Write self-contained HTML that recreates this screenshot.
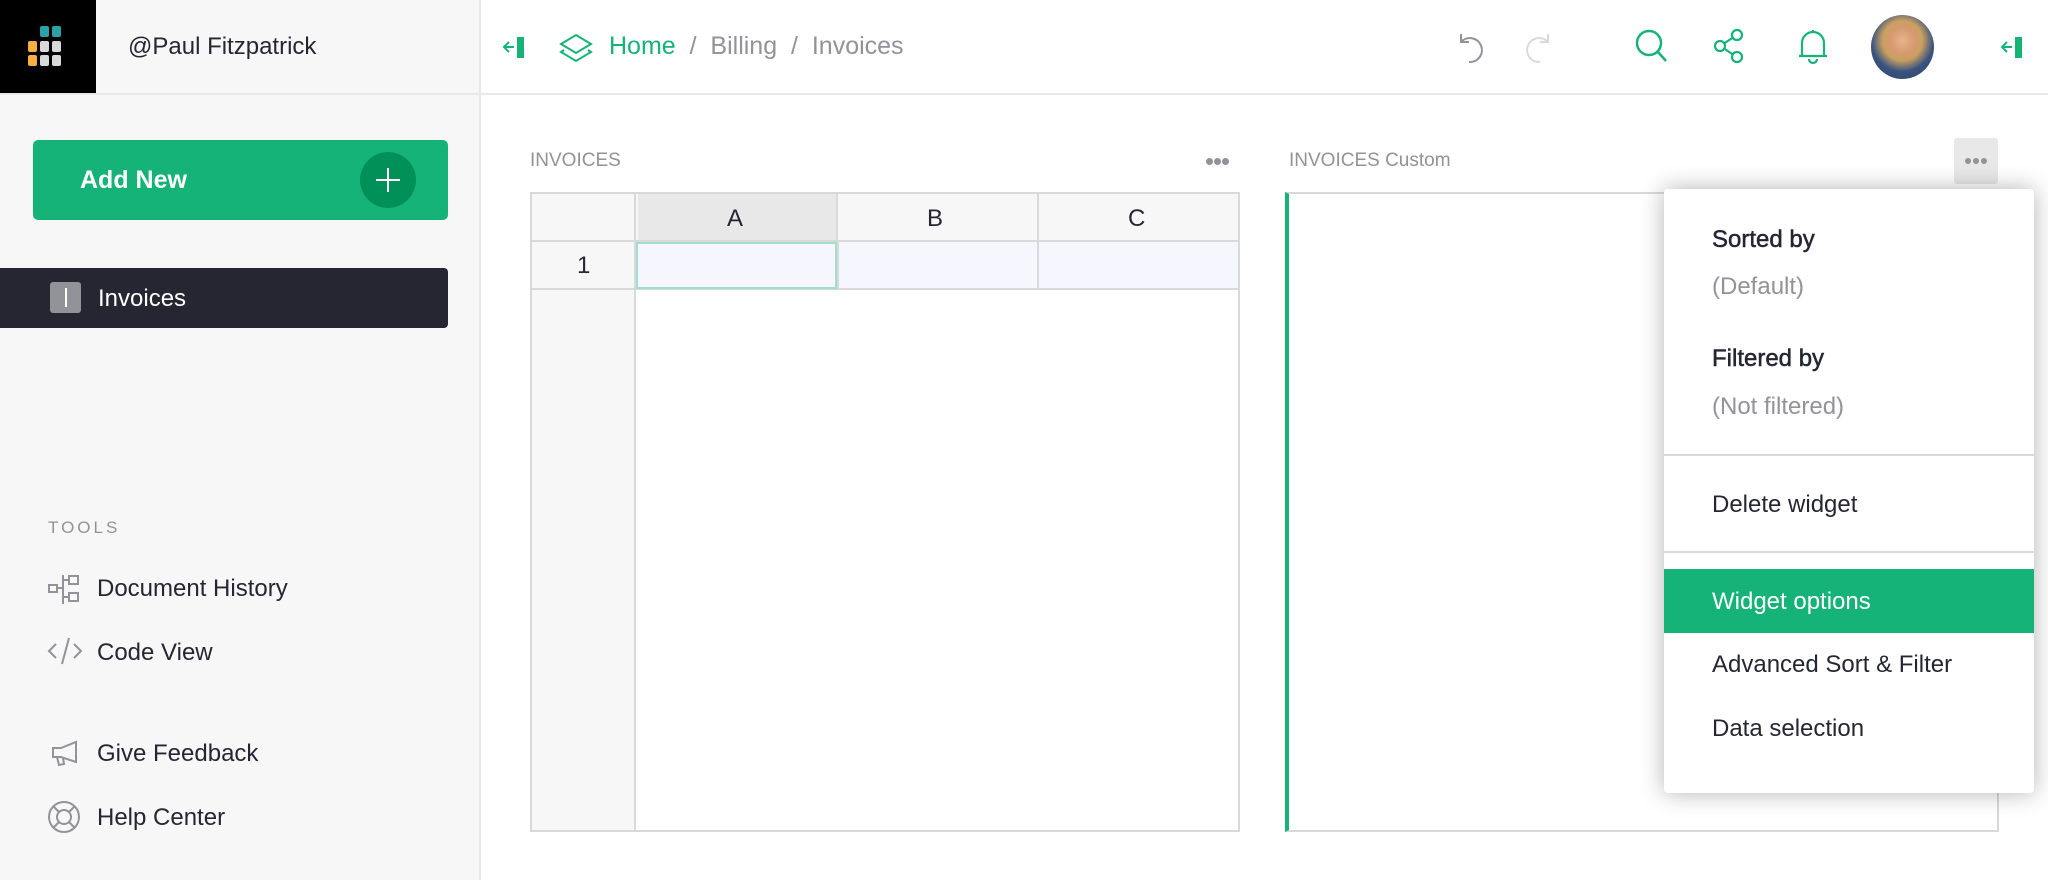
<!DOCTYPE html>
<html><head><meta charset="utf-8"><style>
*{box-sizing:border-box;margin:0;padding:0}
body{width:2048px;height:880px;overflow:hidden;background:#fff;font-family:"Liberation Sans",sans-serif;color:#262633;position:relative}
.abs{position:absolute}
.side{left:0;top:0;width:481px;height:880px;background:#f7f7f7;border-right:2px solid #e8e8e8}
.logo{left:0;top:0;width:96px;height:94px;background:#000}
.hdr{left:0;top:93px;width:2048px;height:2px;background:#e8e8e8}
.t{white-space:nowrap}
.mi{font-size:24px;color:#262633}
.dot{position:absolute;width:7px;height:7px;border-radius:50%;background:#929299}
.med{-webkit-text-stroke:0.5px #262633}
</style></head><body>
<div class="abs side"></div>
<div class="abs logo">
<svg width="96" height="94" viewBox="0 0 96 94">
<rect x="40" y="26" width="9" height="11" rx="2" fill="#2ba2a7"/><rect x="52" y="26" width="9" height="11" rx="2" fill="#2ba2a7"/>
<rect x="28" y="41" width="9" height="11" rx="2" fill="#f9ae41"/><rect x="40" y="41" width="9" height="11" rx="2" fill="#d9d9d9"/><rect x="52" y="41" width="9" height="11" rx="2" fill="#d9d9d9"/>
<rect x="28" y="55" width="9" height="11" rx="2" fill="#f9ae41"/><rect x="40" y="55" width="9" height="11" rx="2" fill="#d9d9d9"/><rect x="52" y="55" width="9" height="11" rx="2" fill="#d9d9d9"/>
</svg></div>
<div class="abs hdr"></div>
<div class="abs t" style="left:128px;top:33px;font-size:24px">@Paul Fitzpatrick</div>

<div class="abs" style="left:33px;top:140px;width:415px;height:80px;background:#16b378;border-radius:5px"></div>
<div class="abs t" style="left:80px;top:166px;font-size:25px;font-weight:bold;color:#fff">Add New</div>
<div class="abs" style="left:360px;top:152px;width:56px;height:56px;border-radius:50%;background:#009058"></div>
<div class="abs" style="left:387px;top:168px;width:2px;height:24px;background:#fff"></div>
<div class="abs" style="left:376px;top:179px;width:24px;height:2px;background:#fff"></div>

<div class="abs" style="left:0;top:268px;width:448px;height:60px;background:#262633;border-radius:0 4px 4px 0"></div>
<div class="abs" style="left:50px;top:282px;width:31px;height:31px;background:#929299;border-radius:3px"></div>
<div class="abs" style="left:65px;top:288px;width:2px;height:19px;background:#fff"></div>
<div class="abs t" style="left:98px;top:285px;font-size:24px;color:#fff">Invoices</div>

<div class="abs t" style="left:48px;top:518px;font-size:17px;letter-spacing:3px;color:#929299">TOOLS</div>
<svg class="abs" style="left:47px;top:571px" width="36" height="36" viewBox="0 0 36 36" fill="none" stroke="#929299" stroke-width="2"><rect x="2" y="14" width="8" height="7"/><line x1="16" y1="4" x2="16" y2="33"/><line x1="10" y1="17" x2="16" y2="17"/><rect x="22" y="5" width="9" height="8"/><rect x="22" y="22" width="9" height="8"/><line x1="16" y1="9" x2="22" y2="9"/><line x1="16" y1="26" x2="22" y2="26"/></svg>
<div class="abs t mi" style="left:97px;top:575px">Document History</div>
<svg class="abs" style="left:47px;top:636px" width="36" height="32" viewBox="0 0 36 32" fill="none" stroke="#929299" stroke-width="2"><path d="M9 8L2 15L9 22M27 8L34 15L27 22M22 2L15 28"/></svg>
<div class="abs t mi" style="left:97px;top:639px">Code View</div>
<svg class="abs" style="left:49px;top:738px" width="32" height="32" viewBox="0 0 32 32" fill="none" stroke="#929299" stroke-width="2"><path d="M27 4L27 24L12 19L4 19L4 10L12 10Z"/><path d="M8 19L10 27L15 26L14 20"/></svg>
<div class="abs t mi" style="left:97px;top:740px">Give Feedback</div>
<svg class="abs" style="left:47px;top:800px" width="34" height="34" viewBox="0 0 34 34" fill="none" stroke="#929299" stroke-width="2"><circle cx="17" cy="17" r="15"/><circle cx="17" cy="17" r="7"/><path d="M7 7L12 12M27 7L22 12M7 27L12 22M27 27L22 22"/></svg>
<div class="abs t mi" style="left:97px;top:804px">Help Center</div>

<svg class="abs" style="left:500px;top:33px" width="28" height="28" viewBox="0 0 28 28"><path d="M14 14H4M9 9L4 14L9 19" stroke="#16b378" stroke-width="2" fill="none"/><rect x="17" y="4" width="7" height="21" fill="#16b378"/></svg>
<svg class="abs" style="left:558px;top:32px" width="36" height="32" viewBox="0 0 36 32" fill="none" stroke="#16b378" stroke-width="2"><path d="M18 3L33 12L18 21L3 12Z"/><path d="M6 18L3 20L18 29L33 20L30 18"/></svg>
<div class="abs t" style="left:609px;top:32px;font-size:25px"><span style="color:#16b378">Home</span><span style="color:#929299"> &nbsp;/ &nbsp;Billing &nbsp;/ &nbsp;Invoices</span></div>

<svg class="abs" style="left:1455px;top:30px" width="34" height="36" viewBox="0 0 34 36" fill="none" stroke="#929299" stroke-width="2"><path d="M6 4V12H14"/><path d="M6 12A12 12 0 1 1 14 32"/></svg>
<svg class="abs" style="left:1520px;top:30px" width="34" height="36" viewBox="0 0 34 36" fill="none" stroke="#d9d9d9" stroke-width="2"><path d="M28 4V12H20"/><path d="M28 12A12 12 0 1 0 20 32"/></svg>
<svg class="abs" style="left:1634px;top:28px" width="36" height="36" viewBox="0 0 36 36" fill="none" stroke="#16b378" stroke-width="2.5"><circle cx="15" cy="15" r="12"/><path d="M24 24L32 33"/></svg>
<svg class="abs" style="left:1712px;top:28px" width="34" height="36" viewBox="0 0 34 36" fill="none" stroke="#16b378" stroke-width="2.2"><circle cx="25" cy="7" r="5"/><circle cx="8" cy="18" r="5"/><circle cx="25" cy="29" r="5"/><path d="M12 15.5L21 9.5M12 20.5L21 26.5"/></svg>
<svg class="abs" style="left:1796px;top:28px" width="34" height="38" viewBox="0 0 34 38" fill="none" stroke="#16b378" stroke-width="2.2"><path d="M17 2V5M6 28V15A11 11 0 0 1 28 15V28M3 28H31M13 31A4 4 0 0 0 21 31"/></svg>
<div class="abs" style="left:1871px;top:15px;width:63px;height:64px;border-radius:50%;background:radial-gradient(circle at 50% 40%,#e8b48c 0,#d79a70 25%,#c9a060 40%,#3a5480 62%,#2c3f66 100%)"></div>
<svg class="abs" style="left:1998px;top:33px" width="28" height="28" viewBox="0 0 28 28"><path d="M14 14H4M9 9L4 14L9 19" stroke="#16b378" stroke-width="2" fill="none"/><rect x="17" y="4" width="7" height="21" fill="#16b378"/></svg>

<div class="abs t" style="left:530px;top:150px;font-size:19px;color:#929299">INVOICES</div>
<div class="dot" style="left:1206px;top:158px"></div><div class="dot" style="left:1214px;top:158px"></div><div class="dot" style="left:1222px;top:158px"></div>
<div class="abs" style="left:530px;top:192px;width:710px;height:640px;border:2px solid #d9d9d9;background:#fff"></div>
<div class="abs" style="left:532px;top:194px;width:104px;height:636px;background:#f7f7f7;border-right:2px solid #d9d9d9"></div>
<div class="abs" style="left:636px;top:194px;width:602px;height:48px;background:#f7f7f7;border-bottom:2px solid #d9d9d9"></div>
<div class="abs" style="left:638px;top:194px;width:198px;height:46px;background:#e8e8e8"></div>
<div class="abs" style="left:836px;top:194px;width:2px;height:96px;background:#d9d9d9"></div>
<div class="abs" style="left:1037px;top:194px;width:2px;height:96px;background:#d9d9d9"></div>
<div class="abs" style="left:532px;top:240px;width:104px;height:2px;background:#d9d9d9"></div>
<div class="abs" style="left:532px;top:288px;width:706px;height:2px;background:#d9d9d9"></div>
<div class="abs" style="left:638px;top:242px;width:600px;height:46px;background:#f5f6ff"></div>
<div class="abs" style="left:837px;top:242px;width:2px;height:46px;background:#d9d9d9"></div>
<div class="abs" style="left:1037px;top:242px;width:2px;height:46px;background:#d9d9d9"></div>
<div class="abs" style="left:636px;top:242px;width:201px;height:47px;border:2px solid #a0e0cb"></div>
<div class="abs t" style="left:727px;top:205px;font-size:24px">A</div>
<div class="abs t" style="left:927px;top:205px;font-size:24px">B</div>
<div class="abs t" style="left:1128px;top:205px;font-size:24px">C</div>
<div class="abs t" style="left:577px;top:252px;font-size:24px">1</div>

<div class="abs t" style="left:1289px;top:150px;font-size:19px;color:#929299">INVOICES Custom</div>
<div class="abs" style="left:1954px;top:138px;width:44px;height:46px;background:#e8e8e8;border-radius:3px"></div>
<div class="dot" style="left:1965px;top:158px;width:6px;height:6px"></div><div class="dot" style="left:1973px;top:158px;width:6px;height:6px"></div><div class="dot" style="left:1981px;top:158px;width:6px;height:6px"></div>
<div class="abs" style="left:1285px;top:192px;width:714px;height:640px;border:2px solid #d9d9d9;border-left:4px solid #16b378;background:#fff"></div>

<div class="abs" style="left:1664px;top:189px;width:370px;height:604px;background:#fff;border-radius:4px;box-shadow:0 0 24px rgba(0,0,0,0.3)">
<div class="abs t med" style="left:48px;top:37px;font-size:24px;color:#262633">Sorted by</div>
<div class="abs t" style="left:48px;top:84px;font-size:24px;color:#929299">(Default)</div>
<div class="abs t med" style="left:48px;top:156px;font-size:24px;color:#262633">Filtered by</div>
<div class="abs t" style="left:48px;top:204px;font-size:24px;color:#929299">(Not filtered)</div>
<div class="abs" style="left:0;top:265px;width:370px;height:2px;background:#d9d9d9"></div>
<div class="abs t mi" style="left:48px;top:302px">Delete widget</div>
<div class="abs" style="left:0;top:362px;width:370px;height:2px;background:#d9d9d9"></div>
<div class="abs" style="left:0;top:380px;width:370px;height:64px;background:#16b378"></div>
<div class="abs t" style="left:48px;top:399px;font-size:24px;color:#fff">Widget options</div>
<div class="abs t mi" style="left:48px;top:462px">Advanced Sort &amp; Filter</div>
<div class="abs t mi" style="left:48px;top:526px">Data selection</div>
</div>
</body></html>
